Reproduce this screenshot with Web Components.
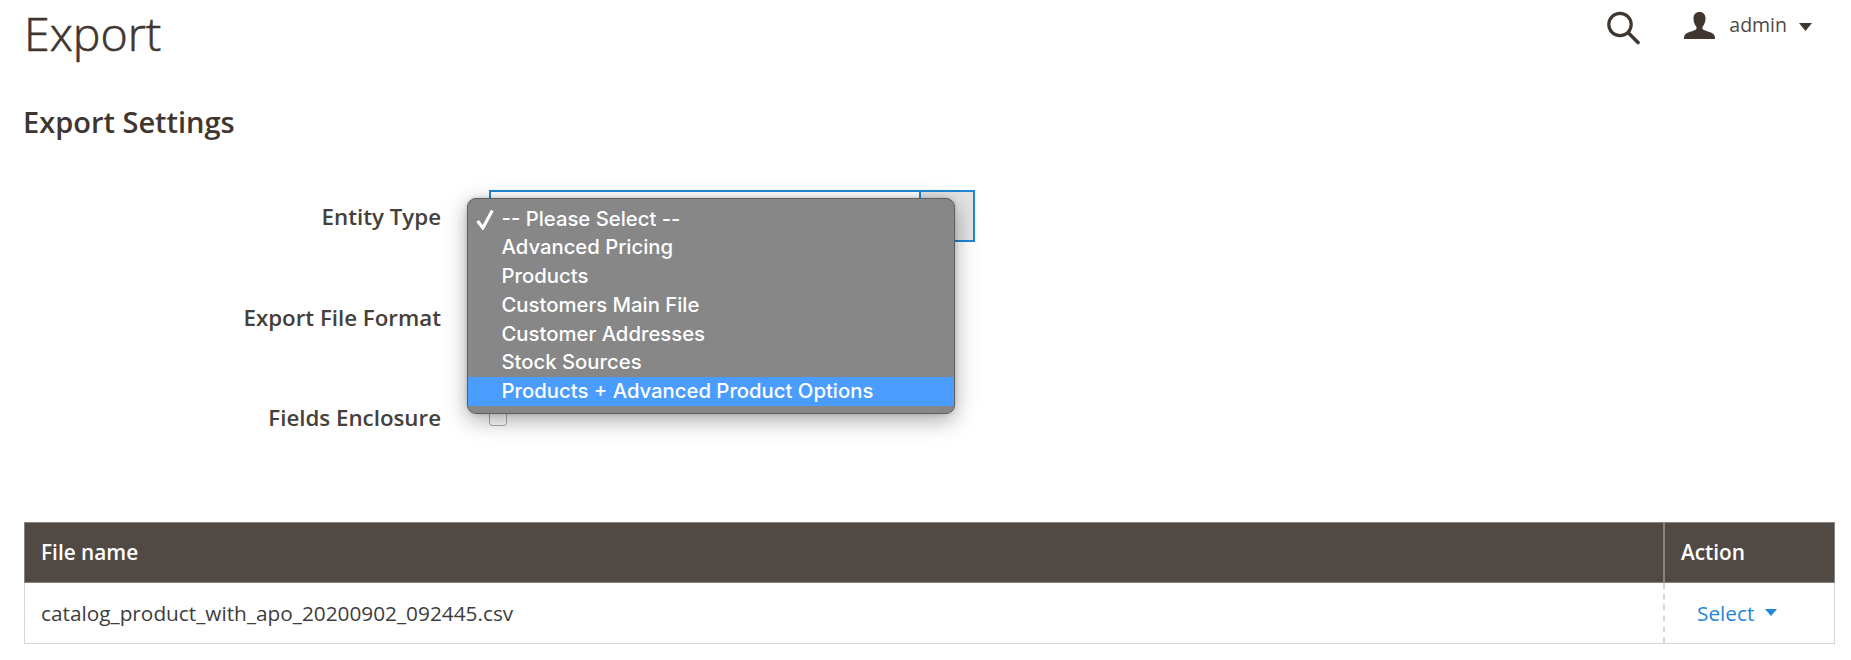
<!DOCTYPE html>
<html lang="en"><head><meta charset="utf-8"><title>Export</title>
<style>
html,body{margin:0;padding:0;background:#fff;height:660px;overflow:hidden}
body{font-family:"Open Sans",sans-serif;color:#41362f}
</style></head><body>
<export-page>
  <page-header slot="header" title="Export" user="admin"></page-header>
  <settings-form slot="form" heading="Export Settings"></settings-form>
  <file-grid slot="grid"></file-grid>
</export-page>
<script>
function define(name, html, setup){
  customElements.define(name, class extends HTMLElement{
    connectedCallback(){
      if(this.shadowRoot) return;
      const r=this.attachShadow({mode:'open'});
      r.innerHTML=typeof html==='function'?html(this):html;
      if(setup) setup(r,this);
    }
  });
}
define('export-page',`<style>:host{display:flex;flex-direction:column;width:1851px;height:660px;box-sizing:border-box;padding:0 16px 0 24px;position:relative}</style>
<slot name="header"></slot><slot name="form"></slot><slot name="grid"></slot>`);

define('page-header',h=>`<style>
:host{display:flex;justify-content:space-between;align-items:flex-start;height:92px}
h1{margin:0;font:300 46.5px/64px "Open Sans",sans-serif;color:#41362f;-webkit-text-stroke:.6px #41362f;padding-top:1px}
.tools{display:flex;align-items:flex-start;color:#41362f}
svg{display:block}
.s{margin:11px 44px 0 0}
.u{margin:11px 14px 0 0}
.n{font:400 19.5px/28px "Open Sans",sans-serif;margin:11px 12px 0 0;color:#514943}
.c{margin:23px 23px 0 0}
</style>
<h1>${h.getAttribute('title')}</h1>
<div class="tools">
<svg class="s" width="34" height="34" viewBox="0 0 34 34" fill="none" stroke="#41362f"><circle cx="14" cy="13.5" r="11.2" stroke-width="3.2"/><path d="M22.5 22 32 31.500" stroke-width="3.600" stroke-linecap="round"/></svg>
<svg class="u" width="31" height="29" viewBox="0 0 31 29" fill="#41362f"><path d="M15.500 1c3.800 0 6 2.500 6 6.400 0 3.100-1 5.900-2.600 7.800-.7.900-.7 2.700.2 3.400.8.600 3 1.300 6.300 2.400 3 1 4.800 2 5.300 4 .2.800.3 2 .3 3H0c0-1 .1-2.200.3-3 .5-2 2.300-3 5.300-4 3.300-1.100 5.500-1.800 6.300-2.400.9-.7.9-2.500.2-3.400-1.600-1.900-2.600-4.700-2.600-7.800 0-3.900 2.200-6.400 6-6.400z"/></svg>
<span class="n">${h.getAttribute('user')}</span>
<svg class="c" width="13" height="8" viewBox="0 0 13 8" fill="#41362f"><path d="M0 0h13L6.500 8z"/></svg>
</div>`);

define('settings-form',h=>`<style>
:host{display:block;position:relative;height:430px}
h2{margin:12px 0 0 -1px;font:600 29px/36px "Open Sans",sans-serif;color:#41362f}
.rows{display:flex;flex-direction:column;margin-top:50px}
</style>
<h2>${h.getAttribute('heading')}</h2>
<div class="rows">
<form-row label="Entity Type"><select-box></select-box></form-row>
<form-row label="Export File Format"></form-row>
<form-row label="Fields Enclosure"><check-box></check-box></form-row>
</div>
<option-menu></option-menu>`);

define('form-row',h=>`<style>
:host{display:grid;grid-template-columns:417px 1fr;column-gap:48px;height:100.5px;align-items:start}
label{font:600 22.3px/54px "Open Sans",sans-serif;color:#45403c;text-align:right}
.c{display:flex}
</style><label>${h.getAttribute('label')}</label><div class="c"><slot></slot></div>`);

define('select-box',`<style>
:host{display:flex;width:486px;height:52px;box-sizing:border-box;border:2px solid #1f87d6;background:#fff}
.f{flex:1}.b{width:52px;border-left:2px solid #1f87d6;background:#e3e3e3}
</style><div class="f"></div><div class="b"></div>`);

define('check-box',`<style>
:host{display:block;width:18px;height:18px;margin-top:17px;box-sizing:border-box;border:1px solid #adadad;border-radius:3px;background:#fff}
</style>`);

define('option-menu',`<style>
:host{display:block;position:absolute;left:443px;top:106px;width:488px;height:216px;box-sizing:border-box;padding:5.6px 0 0;
background:#868786;border:1px solid #5f5f5f;border-radius:9px;box-shadow:0 6px 22px rgba(0,0,0,.34),0 0 4px rgba(0,0,0,.16);
font:500 20.3px/28.75px Inter,"Liberation Sans",sans-serif;color:#fff;overflow:hidden}
div{position:relative;padding-left:33.5px;white-space:nowrap;height:28.75px}
.on{background:#4a9cff}
svg{position:absolute;left:8px;top:4px}
</style>
<div><svg width="19" height="21" viewBox="0 0 18 20" fill="none" stroke="#fff" stroke-width="3"><path d="M1.500 11.500 6.500 18 15.500 1.500"/></svg>-- Please Select --</div>
<div>Advanced Pricing</div><div>Products</div><div>Customers Main File</div><div>Customer Addresses</div><div>Stock Sources</div>
<div class="on">Products + Advanced Product Options</div>`);

define('file-grid',`<style>
:host{display:block;width:1811px;box-sizing:border-box;font:400 20.8px/26px "Open Sans",sans-serif}
.r{display:grid;grid-template-columns:1fr 171px}
.h{height:61px;background:#514943;border:1px solid #8a837e;box-sizing:border-box;color:#fff;font-weight:600;align-items:center}
.h>div{padding:0 0 2px 16px}
.h>div+div{border-left:2px solid #8a837e;height:100%;display:flex;align-items:center;padding:0 0 2px 16px;box-sizing:border-box}
.b{height:61px;box-sizing:border-box;border:1px solid #d6d6d6;border-top:0;align-items:center;color:#3d3d3d}
.b>div{padding:0 0 1px 16px}
.b>div+div{border-left:2px dashed #d6d6d6;height:100%;display:flex;align-items:center;padding:0 0 1px 32px;box-sizing:border-box;color:#1f87d6}
svg{margin-left:11px}
</style>
<div class="r h"><div>File name</div><div>Action</div></div>
<div class="r b"><div>catalog_product_with_apo_20200902_092445.csv</div><div>Select<svg width="12" height="7" viewBox="0 0 12 7" fill="#1f87d6"><path d="M0 0h12L6 7z"/></svg></div></div>`);
</script>
</body></html>
